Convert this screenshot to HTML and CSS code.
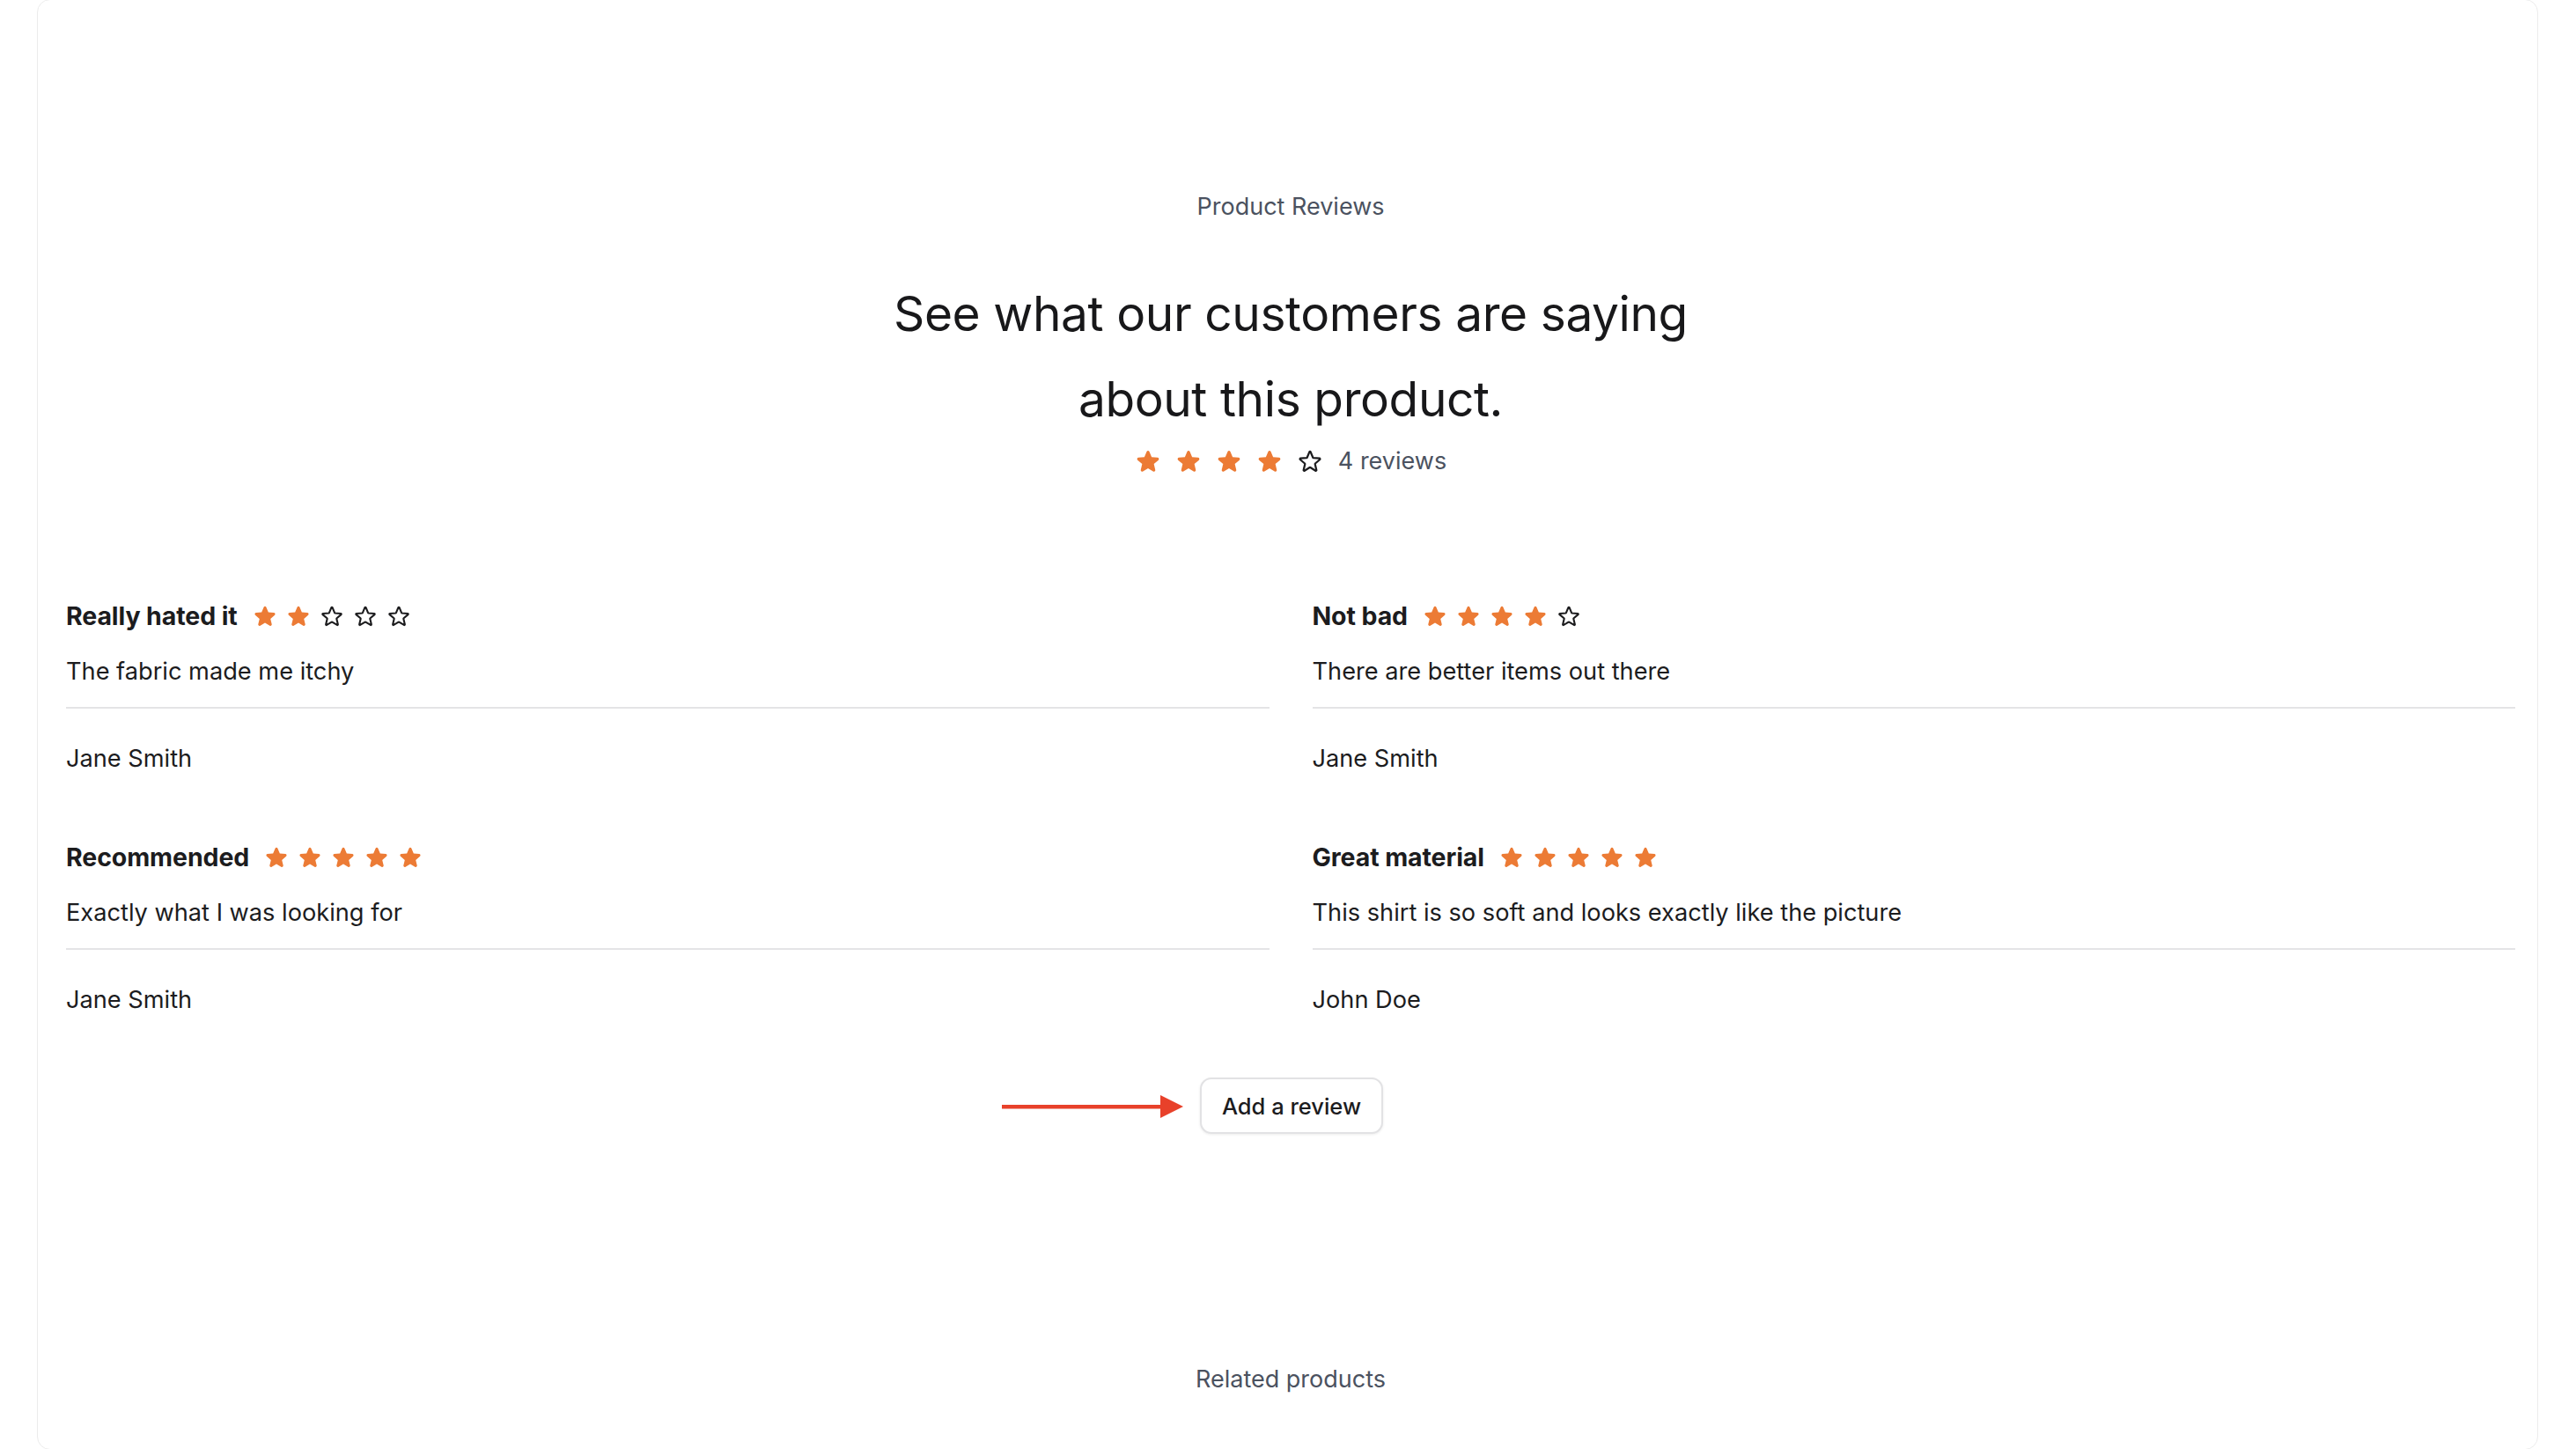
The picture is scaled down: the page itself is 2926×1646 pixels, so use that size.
FILE: index.html
```html
<!DOCTYPE html>
<html lang="en">
<head>
<meta charset="utf-8">
<title>Product Reviews</title>
<link rel="stylesheet" href="styles.css">
</head>
<body>
<svg class="defs" aria-hidden="true">
  <defs>
    <symbol id="star-full" viewBox="0 0 24 24">
      <path fill="currentColor" fill-rule="evenodd" d="M10.788 3.21c.448-1.077 1.976-1.077 2.424 0l2.082 5.006 5.404.434c1.164.093 1.636 1.545.749 2.305l-4.117 3.527 1.257 5.273c.271 1.136-.964 2.033-1.96 1.425L12 18.354 7.373 21.18c-.996.608-2.231-.29-1.960-1.425l1.257-5.273-4.117-3.527c-.887-.76-.415-2.212.749-2.305l5.404-.434 2.082-5.005Z"/>
    </symbol>
    <symbol id="star-empty" viewBox="0 0 24 24">
      <path fill="none" stroke="currentColor" stroke-width="1.8" stroke-linejoin="round" d="M11.48 3.499a.562.562 0 0 1 1.04 0l2.125 5.111a.563.563 0 0 0 .475.345l5.518.442c.499.04.701.663.321.988l-4.204 3.602a.563.563 0 0 0-.182.557l1.285 5.385a.562.562 0 0 1-.84.61l-4.725-2.885a.562.562 0 0 0-.586 0L6.982 20.54a.562.562 0 0 1-.84-.61l1.285-5.386a.562.562 0 0 0-.182-.557l-4.204-3.602a.562.562 0 0 1 .321-.988l5.518-.442a.563.563 0 0 0 .475-.345L11.48 3.5Z"/>
    </symbol>
  </defs>
</svg>

<div class="frame">
  <main class="reviews">
    <p class="eyebrow">Product Reviews</p>
    <h2 class="headline">See what our customers are saying about this product.</h2>
    <div class="summary">
      <span class="stars stars-lg">
        <svg class="star on"><use href="#star-full"/></svg>
        <svg class="star on"><use href="#star-full"/></svg>
        <svg class="star on"><use href="#star-full"/></svg>
        <svg class="star on"><use href="#star-full"/></svg>
        <svg class="star off"><use href="#star-empty"/></svg>
      </span>
      <span class="count">4 reviews</span>
    </div>

    <div class="grid">
      <article class="review">
        <div class="review-head">
          <h3 class="review-title">Really hated it</h3>
          <span class="stars">
            <svg class="star on"><use href="#star-full"/></svg>
            <svg class="star on"><use href="#star-full"/></svg>
            <svg class="star off"><use href="#star-empty"/></svg>
            <svg class="star off"><use href="#star-empty"/></svg>
            <svg class="star off"><use href="#star-empty"/></svg>
          </span>
        </div>
        <p class="review-text">The fabric made me itchy</p>
        <p class="review-author">Jane Smith</p>
      </article>

      <article class="review">
        <div class="review-head">
          <h3 class="review-title">Not bad</h3>
          <span class="stars">
            <svg class="star on"><use href="#star-full"/></svg>
            <svg class="star on"><use href="#star-full"/></svg>
            <svg class="star on"><use href="#star-full"/></svg>
            <svg class="star on"><use href="#star-full"/></svg>
            <svg class="star off"><use href="#star-empty"/></svg>
          </span>
        </div>
        <p class="review-text">There are better items out there</p>
        <p class="review-author">Jane Smith</p>
      </article>

      <article class="review">
        <div class="review-head">
          <h3 class="review-title">Recommended</h3>
          <span class="stars">
            <svg class="star on"><use href="#star-full"/></svg>
            <svg class="star on"><use href="#star-full"/></svg>
            <svg class="star on"><use href="#star-full"/></svg>
            <svg class="star on"><use href="#star-full"/></svg>
            <svg class="star on"><use href="#star-full"/></svg>
          </span>
        </div>
        <p class="review-text">Exactly what I was looking for</p>
        <p class="review-author">Jane Smith</p>
      </article>

      <article class="review">
        <div class="review-head">
          <h3 class="review-title">Great material</h3>
          <span class="stars">
            <svg class="star on"><use href="#star-full"/></svg>
            <svg class="star on"><use href="#star-full"/></svg>
            <svg class="star on"><use href="#star-full"/></svg>
            <svg class="star on"><use href="#star-full"/></svg>
            <svg class="star on"><use href="#star-full"/></svg>
          </span>
        </div>
        <p class="review-text">This shirt is so soft and looks exactly like the picture</p>
        <p class="review-author">John Doe</p>
      </article>
    </div>

    <div class="actions">
      <span class="cta">
        <svg class="arrow" viewBox="0 0 206 28" aria-hidden="true">
          <rect x="0" y="12" width="184" height="4.5" fill="currentColor"/>
          <polygon points="180,1 206,14 180,27" fill="currentColor"/>
        </svg>
        <button class="btn" type="button">Add a review</button>
      </span>
    </div>

    <p class="related">Related products</p>
  </main>
</div>
</body>
</html>
```

FILE: styles.css
```css
* {
  box-sizing: border-box;
}

html, body {
  margin: 0;
  padding: 0;
  background: #ffffff;
}

body {
  font-family: Inter, "Noto Sans", "Liberation Sans", sans-serif;
  color: #1c1c1e;
  overflow: hidden;
}

.defs {
  position: absolute;
  width: 0;
  height: 0;
  overflow: hidden;
}

.frame {
  margin: -1px 43px 0 42px;
  height: 1648px;
  border: 1px solid #ececec;
  border-radius: 15px;
}

.reviews {
  padding: 217px 25px 0 32px;
  display: flex;
  flex-direction: column;
}

.eyebrow {
  margin: 0;
  text-align: center;
  font-size: 27px;
  line-height: 36px;
  color: #4b5260;
}

.headline {
  margin: 55px auto 0;
  max-width: 960px;
  text-align: center;
  font-size: 55px;
  line-height: 97px;
  font-weight: 400;
  color: #18181a;
  letter-spacing: -0.4px;
}

.summary {
  display: flex;
  justify-content: center;
  align-items: center;
  gap: 17px;
  height: 44px;
}

.stars {
  display: inline-flex;
  align-items: center;
  gap: 10px;
}

.stars-lg {
  gap: 16px;
}

.star {
  width: 28px;
  height: 28px;
  display: block;
}

.stars-lg .star {
  width: 30px;
  height: 30px;
}

.star.on {
  color: #ec7b35;
}

.star.off {
  color: #1c1c1e;
}

.count {
  font-size: 27px;
  line-height: 36px;
  color: #4b5260;
}

.grid {
  margin-top: 134px;
  display: grid;
  grid-template-columns: 1fr 1fr;
  column-gap: 49px;
  row-gap: 72px;
}

.review-head {
  display: flex;
  align-items: center;
  gap: 17px;
  height: 40px;
}

.review-title {
  margin: 0;
  font-size: 28.5px;
  line-height: 40px;
  font-weight: 700;
  color: #1c1c1e;
  letter-spacing: -0.1px;
}

.review-text {
  margin: 23px 0 0;
  padding-bottom: 20px;
  border-bottom: 2px solid #e4e4e6;
  font-size: 27.2px;
  line-height: 40px;
  color: #1c1c1e;
}

.review-author {
  margin: 37px 0 0;
  font-size: 27.2px;
  line-height: 40px;
  color: #1c1c1e;
}

.actions {
  margin-top: 68px;
  display: flex;
  justify-content: center;
  padding-left: 2px;
}

.cta {
  position: relative;
  display: inline-block;
}

.arrow {
  position: absolute;
  right: calc(100% + 19px);
  top: 50%;
  width: 206px;
  height: 28px;
  margin-top: -13px;
  color: #e8412a;
}

.btn {
  display: block;
  height: 64px;
  padding: 0 23px;
  font-family: inherit;
  font-size: 25.5px;
  font-weight: 500;
  color: #1c1c1e;
  background: #ffffff;
  border: 2px solid #e2e2e4;
  border-radius: 13px;
  box-shadow: 0 1px 3px rgba(0, 0, 0, 0.08);
}

.related {
  margin: 261px 0 0;
  text-align: center;
  font-size: 27px;
  line-height: 36px;
  color: #4b5260;
}
```
